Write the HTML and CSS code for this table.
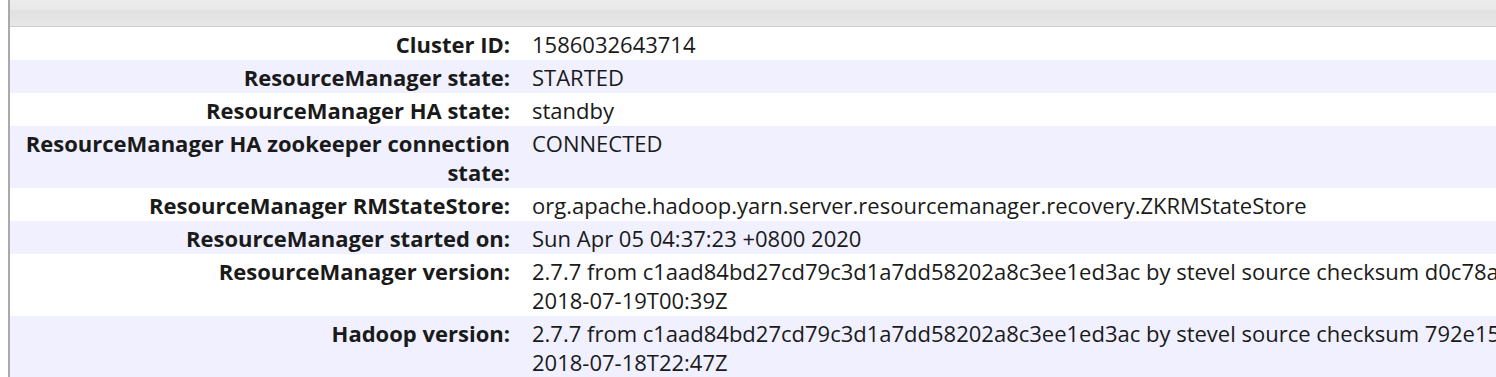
FILE: index.html
```html
<!DOCTYPE html>
<html>
<head>
<meta charset="utf-8">
<title>About the Cluster</title>
<link rel="stylesheet" href="styles.css">
</head>
<body>
<div class="page">
  <div class="topbar"></div>
  <table class="info">
    <colgroup><col class="c-label"><col class="c-value"></colgroup>
    <tbody>
      <tr><th>Cluster ID:</th><td>1586032643714</td></tr>
      <tr class="alt"><th>ResourceManager state:</th><td>STARTED</td></tr>
      <tr><th>ResourceManager HA state:</th><td>standby</td></tr>
      <tr class="alt"><th>ResourceManager HA zookeeper connection state:</th><td>CONNECTED</td></tr>
      <tr><th>ResourceManager RMStateStore:</th><td>org.apache.hadoop.yarn.server.resourcemanager.recovery.ZKRMStateStore</td></tr>
      <tr class="alt"><th>ResourceManager started on:</th><td>Sun Apr 05 04:37:23 +0800 2020</td></tr>
      <tr><th>ResourceManager version:</th><td>2.7.7 from c1aad84bd27cd79c3d1a7dd58202a8c3ee1ed3ac by stevel source checksum d0c78a1f3b5e8d4c2a9f6e1b7c3d5a84 on <span class="date">2018-07-19T00:39Z</span></td></tr>
      <tr class="alt"><th>Hadoop version:</th><td>2.7.7 from c1aad84bd27cd79c3d1a7dd58202a8c3ee1ed3ac by stevel source checksum 792e15d20b12c74bd6f19a1fb886490 on <span class="date">2018-07-18T22:47Z</span></td></tr>
    </tbody>
  </table>
</div>
</body>
</html>
```
FILE: styles.css
```css
html, body {
  margin: 0;
  padding: 0;
  overflow: hidden;
  background: #ffffff;
}
body {
  font-family: "Open Sans", "Noto Sans", sans-serif;
  font-size: 22px;
  color: #1a1a1a;
}
.page {
  margin-left: 8px;
  border-left: 2px solid #aaaaaa;
  width: 1980px;
  height: 377px;
}
.topbar {
  height: 26px;
  border-bottom: 1px solid #cccccc;
  background: linear-gradient(to bottom, #ececec 0px, #e9e9e9 9px, #e1e1e1 11px, #e6e6e6 24px, #e8e8e8 26px);
}
.info {
  border-collapse: collapse;
  table-layout: fixed;
  width: 1961px;
}
.c-label { width: 511px; }
.c-value { width: 1450px; }
.info th, .info td {
  padding: 3px 0 1px;
  line-height: 29px;
  vertical-align: top;
}
.info th {
  text-align: right;
  font-weight: 700;
  padding-left: 12px;
  padding-right: 11px;
}
.info td {
  text-align: left;
  padding-left: 11px;
  padding-right: 39px;
}
.info .date {
  white-space: nowrap;
}
.info tr.alt {
  background: #f0f0ff;
}
```
